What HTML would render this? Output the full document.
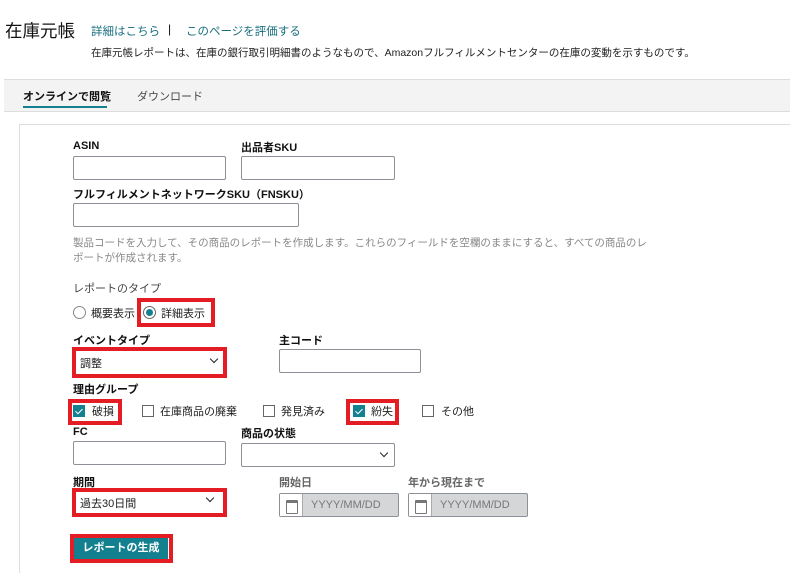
<!DOCTYPE html>
<html><head><meta charset="utf-8"><style>
*{margin:0;padding:0;box-sizing:border-box}
html,body{width:790px;height:573px;overflow:hidden}
body{background:#fff;font-family:"Liberation Sans","Noto Sans CJK JP",sans-serif;color:#111;position:relative}
.a{position:absolute;white-space:nowrap}
.lbl{font-size:11px;font-weight:bold;color:#111}
.inp{position:absolute;border:1px solid #8d9096;border-radius:2px;background:#fff;height:24px}
.red{position:absolute;border:4px solid #e41c24}
.t{font-size:11px;color:#222}
.chk{position:absolute;width:12px;height:12px;border:1px solid #666;background:#fff}
.chk.on{background:#12808f;border-color:#12808f}
.chk.on:after{content:"";position:absolute;left:3px;top:1px;width:3px;height:6px;border:solid #fff;border-width:0 1px 1px 0;transform:rotate(45deg)}
.car{position:absolute;width:6px;height:6px;border:solid #222;border-width:0 1.5px 1.5px 0;transform:rotate(45deg)}
.date{position:absolute;height:24px;width:120px;border:1px solid #8d9096;border-radius:2px;background:#d5d6d8}
.date .ic{position:absolute;left:0;top:0;width:23px;height:22px;background:#fff;border-right:1px solid #aaa}
.date .ic:after{content:"";position:absolute;left:6px;top:6px;width:10px;height:10px;border:1.5px solid #777;border-top-width:3px;border-radius:1px}
.date span{position:absolute;left:31px;top:5px;font-size:11px;color:#777}
</style></head><body>
<div class="a" style="left:5px;top:18px;font-size:17.5px;color:#111">在庫元帳</div>
<div class="a" style="left:91px;top:23px;font-size:11.5px;color:#1b6f80">詳細はこちら</div>
<div class="a" style="left:168px;top:22px;font-size:12px;color:#111">|</div>
<div class="a" style="left:186px;top:23px;font-size:11.5px;color:#1b6f80">このページを評価する</div>
<div class="a" style="left:91px;top:45px;font-size:10.5px;color:#222">在庫元帳レポートは、在庫の銀行取引明細書のようなもので、Amazonフルフィルメントセンターの在庫の変動を示すものです。</div>
<div class="a" style="left:4px;top:79px;width:786px;height:33px;background:#f3f3f3;border-top:1px solid #ddd;border-bottom:1px solid #ddd"></div>
<div class="a" style="left:23px;top:88px;font-size:11px;font-weight:bold;color:#111">オンラインで閲覧</div>
<div class="a" style="left:23px;top:106px;width:84px;height:2px;background:#12808f"></div>
<div class="a" style="left:137px;top:88px;font-size:11px;color:#444">ダウンロード</div>
<div class="a" style="left:19px;top:124px;width:771px;height:449px;border:1px solid #ddd;border-right:none;border-bottom:none"></div>

<div class="a lbl" style="left:73px;top:140px">ASIN</div>
<div class="inp" style="left:73px;top:156px;width:153px"></div>
<div class="a lbl" style="left:241px;top:139px">出品者SKU</div>
<div class="inp" style="left:241px;top:156px;width:154px"></div>
<div class="a lbl" style="left:73px;top:186px">フルフィルメントネットワークSKU（FNSKU）</div>
<div class="inp" style="left:73px;top:203px;width:226px"></div>
<div class="a" style="left:73px;top:235px;font-size:10.5px;color:#888">製品コードを入力して、その商品のレポートを作成します。これらのフィールドを空欄のままにすると、すべての商品のレ</div>
<div class="a" style="left:73px;top:250px;font-size:10.5px;color:#888">ポートが作成されます。</div>

<div class="a" style="left:73px;top:280px;font-size:11px;color:#444">レポートのタイプ</div>
<div class="a" style="left:73px;top:306px;width:13px;height:13px;border:1px solid #888;border-radius:50%"></div>
<div class="a t" style="left:91px;top:305px">概要表示</div>
<div class="red" style="left:137px;top:298px;width:78px;height:29px"></div>
<div class="a" style="left:143px;top:306px;width:13px;height:13px;border:1px solid #666;border-radius:50%"></div>
<div class="a" style="left:146px;top:309px;width:7px;height:7px;background:#12808f;border-radius:50%"></div>
<div class="a t" style="left:161px;top:305px">詳細表示</div>

<div class="a lbl" style="left:73px;top:332px">イベントタイプ</div>
<div class="red" style="left:72px;top:347px;width:155px;height:31px"></div>
<div class="a t" style="left:80px;top:355px">調整</div>
<div class="car" style="left:211px;top:356px"></div>
<div class="a lbl" style="left:279px;top:332px">主コード</div>
<div class="inp" style="left:279px;top:349px;width:142px"></div>

<div class="a lbl" style="left:73px;top:381px">理由グループ</div>
<div class="red" style="left:68px;top:399px;width:54px;height:26px"></div>
<div class="chk on" style="left:73px;top:405px"></div>
<div class="a t" style="left:92px;top:403px">破損</div>
<div class="chk" style="left:142px;top:405px"></div>
<div class="a t" style="left:160px;top:403px">在庫商品の廃棄</div>
<div class="chk" style="left:263px;top:405px"></div>
<div class="a t" style="left:281px;top:403px">発見済み</div>
<div class="red" style="left:346px;top:399px;width:53px;height:26px"></div>
<div class="chk on" style="left:353px;top:405px"></div>
<div class="a t" style="left:371px;top:403px">紛失</div>
<div class="chk" style="left:422px;top:405px"></div>
<div class="a t" style="left:441px;top:403px">その他</div>

<div class="a lbl" style="left:73px;top:426px">FC</div>
<div class="inp" style="left:73px;top:441px;width:153px"></div>
<div class="a lbl" style="left:241px;top:425px">商品の状態</div>
<div class="inp" style="left:241px;top:443px;width:154px"></div>
<div class="car" style="left:381px;top:450px"></div>

<div class="a lbl" style="left:73px;top:474px">期間</div>
<div class="red" style="left:72px;top:488px;width:155px;height:29px"></div>
<div class="a t" style="left:80px;top:495px">過去30日間</div>
<div class="car" style="left:207px;top:495px"></div>
<div class="a" style="left:279px;top:474px;font-size:11px;font-weight:bold;color:#666">開始日</div>
<div class="date" style="left:279px;top:493px"><div class="ic"></div><span>YYYY/MM/DD</span></div>
<div class="a" style="left:408px;top:474px;font-size:11px;font-weight:bold;color:#666">年から現在まで</div>
<div class="date" style="left:408px;top:493px"><div class="ic"></div><span>YYYY/MM/DD</span></div>

<div class="red" style="left:70px;top:534px;width:103px;height:29px"></div>
<div class="a" style="left:74px;top:538px;width:94px;height:21px;background:#12808f;color:#fff;font-size:11px;font-weight:bold;text-align:center;line-height:21px">レポートの生成</div>
</body></html>
